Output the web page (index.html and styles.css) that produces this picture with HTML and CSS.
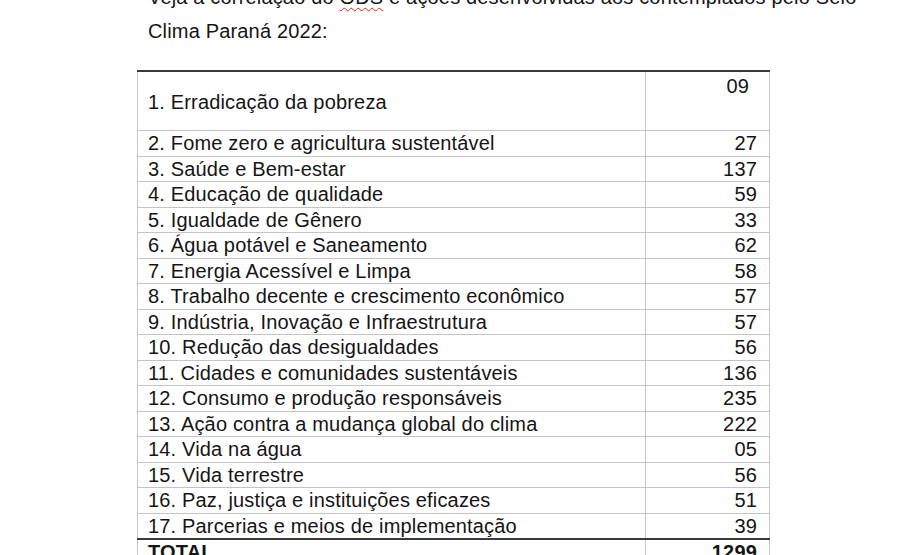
FILE: index.html
```html
<!DOCTYPE html>
<html lang="pt">
<head>
<meta charset="utf-8">
<link rel="stylesheet" href="styles.css">
</head>
<body>
<div class="page">
  <p class="intro">Veja a correlação do <span class="spell">ODS</span> e ações desenvolvidas aos contemplados pelo Selo<br>Clima Paraná 2022:</p>
  <table class="ods">
    <tr class="first"><td class="name">1. Erradicação da pobreza</td><td class="num num-top">09</td></tr>
    <tr><td class="name">2. Fome zero e agricultura sustentável</td><td class="num">27</td></tr>
    <tr><td class="name">3. Saúde e Bem-estar</td><td class="num">137</td></tr>
    <tr><td class="name">4. Educação de qualidade</td><td class="num">59</td></tr>
    <tr><td class="name">5. Igualdade de Gênero</td><td class="num">33</td></tr>
    <tr><td class="name">6. Água potável e Saneamento</td><td class="num">62</td></tr>
    <tr><td class="name">7. Energia Acessível e Limpa</td><td class="num">58</td></tr>
    <tr><td class="name">8. Trabalho decente e crescimento econômico</td><td class="num">57</td></tr>
    <tr><td class="name">9. Indústria, Inovação e Infraestrutura</td><td class="num">57</td></tr>
    <tr><td class="name">10. Redução das desigualdades</td><td class="num">56</td></tr>
    <tr><td class="name">11. Cidades e comunidades sustentáveis</td><td class="num">136</td></tr>
    <tr><td class="name">12. Consumo e produção responsáveis</td><td class="num">235</td></tr>
    <tr><td class="name">13. Ação contra a mudança global do clima</td><td class="num">222</td></tr>
    <tr><td class="name">14. Vida na água</td><td class="num">05</td></tr>
    <tr><td class="name">15. Vida terrestre</td><td class="num">56</td></tr>
    <tr><td class="name">16. Paz, justiça e instituições eficazes</td><td class="num">51</td></tr>
    <tr><td class="name">17. Parcerias e meios de implementação</td><td class="num">39</td></tr>
    <tr class="total"><td class="name">TOTAL</td><td class="num">1299</td></tr>
  </table>
</div>
</body>
</html>
```

FILE: styles.css
```css
html, body {
  margin: 0;
  padding: 0;
  background: #ffffff;
}
body {
  font-family: "Liberation Sans", Arial, sans-serif;
  color: #151515;
  font-size: 20px;
  letter-spacing: 0.17px;
  overflow: hidden;
  height: 555px;
}
.page {
  padding-left: 148px;
}
.intro {
  margin: -20px 0 0 0;
  line-height: 34px;
  white-space: nowrap;
}
.spell {
  text-decoration: underline wavy #e02020;
  text-decoration-thickness: 1px;
  text-underline-offset: 3px;
}
.ods {
  margin: 22px 0 0 -11px;
  border-collapse: collapse;
  width: 633px;
  border-top: 2px solid #3a3a3a;
}
.ods td {
  border: 1px solid #c4c4c4;
  padding: 0;
  line-height: 24.5px;
  vertical-align: top;
}
.ods tr:first-child td {
  border-top: 2px solid #3a3a3a;
}
.name {
  width: 497px;
  padding-left: 10px !important;
}
.num {
  text-align: right;
  padding-right: 12px !important;
}
.first td {
  height: 56px;
}
.first .name {
  vertical-align: middle;
  padding-top: 2px !important;
}
.num-top {
  padding-right: 20px !important;
  padding-top: 2px !important;
}
.total td {
  border-top: 2px solid #3a3a3a;
  font-weight: bold;
}
```
